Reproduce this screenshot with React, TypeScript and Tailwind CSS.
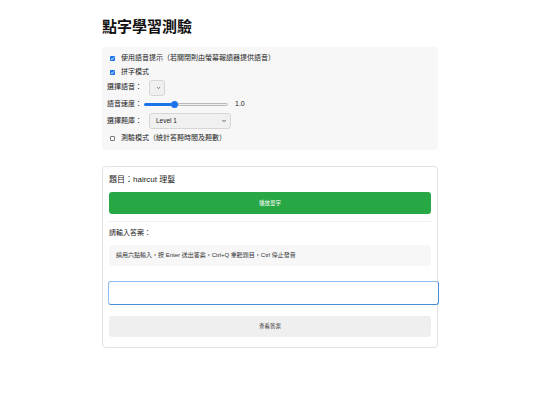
import { ChevronDown } from 'lucide-react';

const FONT = { fontFamily: '"Liberation Sans", "Noto Sans CJK TC", sans-serif' };

// ─── small pieces ─────────────────────────────────────────────────────────────
function Check({ on }: { on: boolean }) {
  return on ? (
    <span className="w-[5px] h-[5px] rounded-[1px] bg-[#1a73e8] flex items-center justify-center flex-shrink-0">
      <svg viewBox="0 0 10 10" className="w-[5px] h-[5px]">
        <path d="M2 5.2 4.2 7.3 8 2.8" stroke="white" strokeWidth="1.8" fill="none" />
      </svg>
    </span>
  ) : (
    <span className="w-[5px] h-[5px] rounded-[1px] border border-[#767676] bg-white flex-shrink-0" />
  );
}

function Select({ w, label }: { w: string; label?: string }) {
  return (
    <div className={`${w} h-[16px] rounded-[3px] border border-[#d6d6d6] bg-[#f0f0f0] flex items-center justify-between pl-[6px] pr-[3px]`}>
      <span className="text-[6.5px] text-[#222]">{label}</span>
      <ChevronDown className="w-[6px] h-[6px] text-[#333]" strokeWidth={3} />
    </div>
  );
}

export default function App() {
  return (
    <div style={FONT} className="bg-white w-[540px] h-[405px] text-[#222]">
      <div className="w-[336px] mx-auto pt-[18px]">
        <h1 className="text-[15px] leading-[18px] font-bold text-[#111] mb-[11px]">點字學習測驗</h1>

        {/* settings */}
        <div className="bg-[#f7f7f8] rounded-[4px] px-[5px] pt-[4px] pb-[4px] text-[7px]">
          <div className="h-[14px] flex items-center gap-[6px] pl-[3px]">
            <Check on />
            <span>使用語音提示（若關閉則由螢幕報讀器提供語音）</span>
          </div>
          <div className="h-[14px] flex items-center gap-[6px] pl-[3px]">
            <Check on />
            <span>拼字模式</span>
          </div>
          <div className="h-[17px] flex items-center gap-[7px]">
            <span className="w-[35px]">選擇語音：</span>
            <Select w="w-[16px]" />
          </div>
          <div className="h-[16px] flex items-center">
            <span className="w-[37px]">語音速度：</span>
            <div className="w-[84px] flex items-center">
              <div className="w-[27px] h-[3px] rounded-l-full bg-[#1a73e8]" />
              <div className="w-[7px] h-[7px] rounded-full bg-[#1a73e8] flex-shrink-0" />
              <div className="flex-1 h-[3px] rounded-r-full border border-[#b8b8b8] bg-[#efefef]" />
            </div>
            <span className="ml-[7px]">1.0</span>
          </div>
          <div className="h-[18px] flex items-center gap-[7px]">
            <span className="w-[35px]">選擇題庫：</span>
            <Select w="w-[82px]" label="Level 1" />
          </div>
          <div className="h-[16px] flex items-center gap-[6px] pl-[3px]">
            <Check on={false} />
            <span>測驗模式（統計答題時間及題數）</span>
          </div>
        </div>

        {/* quiz card */}
        <div className="mt-[16px] border border-[#e2e2e2] rounded-[4px] px-[6px] pt-[7px] pb-[10px]">
          <p className="h-[12px] flex items-center text-[8px]">題目：haircut 理髮</p>
          <button className="mt-[6px] w-full h-[22px] rounded-[3px] bg-[#28a745] text-white text-[5.5px] flex items-center justify-center">
            播放單字
          </button>
          <div className="mt-[7px] border-t border-[#f0f0f0]" />
          <p className="mt-[5px] h-[12px] flex items-center text-[7px]">請輸入答案：</p>
          <div className="mt-[6px] h-[21px] bg-[#f7f7f8] rounded-[3px] px-[7px] flex items-center text-[6px] text-[#333]">
            請用六點輸入，按 Enter 送出答案，Ctrl+Q 重聽題目，Ctrl 停止發音
          </div>
          <div className="mt-[15px] -ml-[1px] w-[331px] h-[24px] rounded-[3px] border border-[#4a8fd6] border-t-[#8fbdf0] border-l-[#8fbdf0] bg-white" />
          <button className="mt-[11px] w-full h-[21px] rounded-[3px] bg-[#efefef] text-[#333] text-[5.5px] flex items-center justify-center">
            查看答案
          </button>
        </div>
      </div>
    </div>
  );
}
